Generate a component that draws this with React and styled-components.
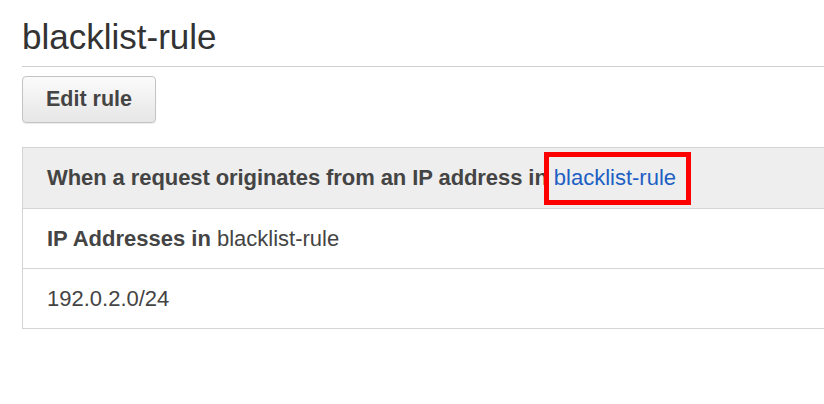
import React from "react";
import styled, { createGlobalStyle } from "styled-components";

const GlobalStyle = createGlobalStyle`
  body {
    margin: 0;
    background: #fff;
    font-family: "Liberation Sans", Arial, Helvetica, sans-serif;
    color: #444;
  }
`;

const Page = styled.div`
  padding: 17px 0 0 22px;
  overflow: hidden;
`;

const Title = styled.h1`
  margin: 0;
  font: 400 35px/40px "Liberation Sans", Arial, sans-serif;
  color: #333;
  padding-bottom: 9px;
  border-bottom: 1px solid #cfcfcf;
`;

const Button = styled.button`
  margin-top: 9px;
  height: 47px;
  padding: 0 23px;
  font: bold 21.5px "Liberation Sans", Arial, sans-serif;
  color: #444;
  background: linear-gradient(to bottom, #fbfbfb, #e6e6e6);
  border: 1px solid #c4c4c4;
  border-radius: 4px;
  box-shadow: 0 1px 1px rgba(0, 0, 0, 0.08);
`;

const Table = styled.div`
  margin-top: 24px;
  width: 900px;
  border: 1px solid #d4d4d4;
`;

const Row = styled.div`
  display: flex;
  align-items: center;
  height: ${({ head }) => (head ? "60px" : "59px")};
  padding-left: 24px;
  font-size: 22px;
  color: #444;
  background: ${({ head }) => (head ? "#eeeeee" : "#fff")};
  & + & {
    border-top: 1px solid #d4d4d4;
  }
`;

const Strong = styled.b`
  font-weight: bold;
  white-space: pre;
  letter-spacing: ${({ tight }) => (tight ? "-0.08px" : "0")};
`;

const Link = styled.a`
  position: relative;
  color: #1d5fc4;
  text-decoration: none;
  &::after {
    content: "";
    position: absolute;
    left: -10px;
    right: -15px;
    top: -13px;
    bottom: -14px;
    border: 5px solid #fe0000;
  }
`;

export default function App() {
  return (
    <Page>
      <GlobalStyle />
      <Title>blacklist-rule</Title>
      <Button>Edit rule</Button>
      <Table>
        <Row head>
          <Strong tight>When a request originates from an IP address in </Strong>
          <Link href="#">blacklist-rule</Link>
        </Row>
        <Row>
          <Strong>IP Addresses in </Strong>blacklist-rule
        </Row>
        <Row>192.0.2.0/24</Row>
      </Table>
    </Page>
  );
}
